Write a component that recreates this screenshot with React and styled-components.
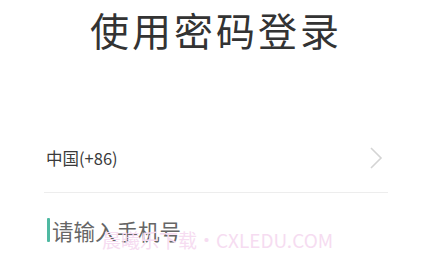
import styled, { createGlobalStyle } from "styled-components";

const Global = createGlobalStyle`
  html, body { margin: 0; padding: 0; background: #fff; }
  body { font-family: "Noto Sans CJK SC", "Noto Sans", sans-serif; }
`;

const Page = styled.div`
  width: 445px;
  height: 262px;
  overflow: hidden;
  display: flex;
  flex-direction: column;
  padding: 0 57px 0 44px;
  box-sizing: border-box;
`;

const Title = styled.h1`
  flex-shrink: 0;
  margin: 0;
  padding: 2px 0 0 46px;
  font-size: 39px;
  font-weight: 400;
  letter-spacing: 3px;
  line-height: 54px;
  color: #333;
`;

const Row = styled.div`
  flex-shrink: 0;
  display: flex;
  align-items: ${p => p.align || "center"};
  justify-content: space-between;
  height: ${p => p.h}px;
  padding-bottom: ${p => p.pb || 0}px;
  border-bottom: ${p => (p.line ? "1px solid #ededed" : "none")};
  box-sizing: border-box;
`;

const Region = styled.span`
  font-size: 16.5px;
  color: #3a3a3a;
  padding-left: 2px;
`;

const Field = styled.div`
  position: relative;
  display: flex;
  align-items: center;
  padding-left: 3px;
`;

const Caret = styled.span`
  width: 3px;
  height: 24px;
  background: #4fb9a2;
  border-radius: 1px;
`;

const Placeholder = styled.span`
  font-size: 21.5px;
  color: #666;
  margin-left: 2px;
`;

const Watermark = styled.span`
  position: absolute;
  left: 58px;
  top: 11px;
  font-size: 19px;
  color: #f6dcf1;
  white-space: nowrap;
  font-family: "Noto Sans CJK SC", "Liberation Sans", sans-serif;
`;

const Chevron = () => (
  <svg width="16" height="24" viewBox="0 0 16 24" style={{ marginRight: 4 }}>
    <path d="M3 2 L13 12 L3 22" fill="none" stroke="#d4d4d4" strokeWidth="1.6" />
  </svg>
);

export default function App() {
  return (
    <>
      <Global />
      <Page>
        <Title>使用密码登录</Title>
        <Row h={137} line align="flex-end" pb={22}>
          <Region>中国(+86)</Region>
          <Chevron />
        </Row>
        <Row h={74}>
          <Field>
            <Caret />
            <Placeholder>请输入手机号</Placeholder>
            <Watermark>晨曦乐下载・CXLEDU.COM</Watermark>
          </Field>
        </Row>
      </Page>
    </>
  );
}
